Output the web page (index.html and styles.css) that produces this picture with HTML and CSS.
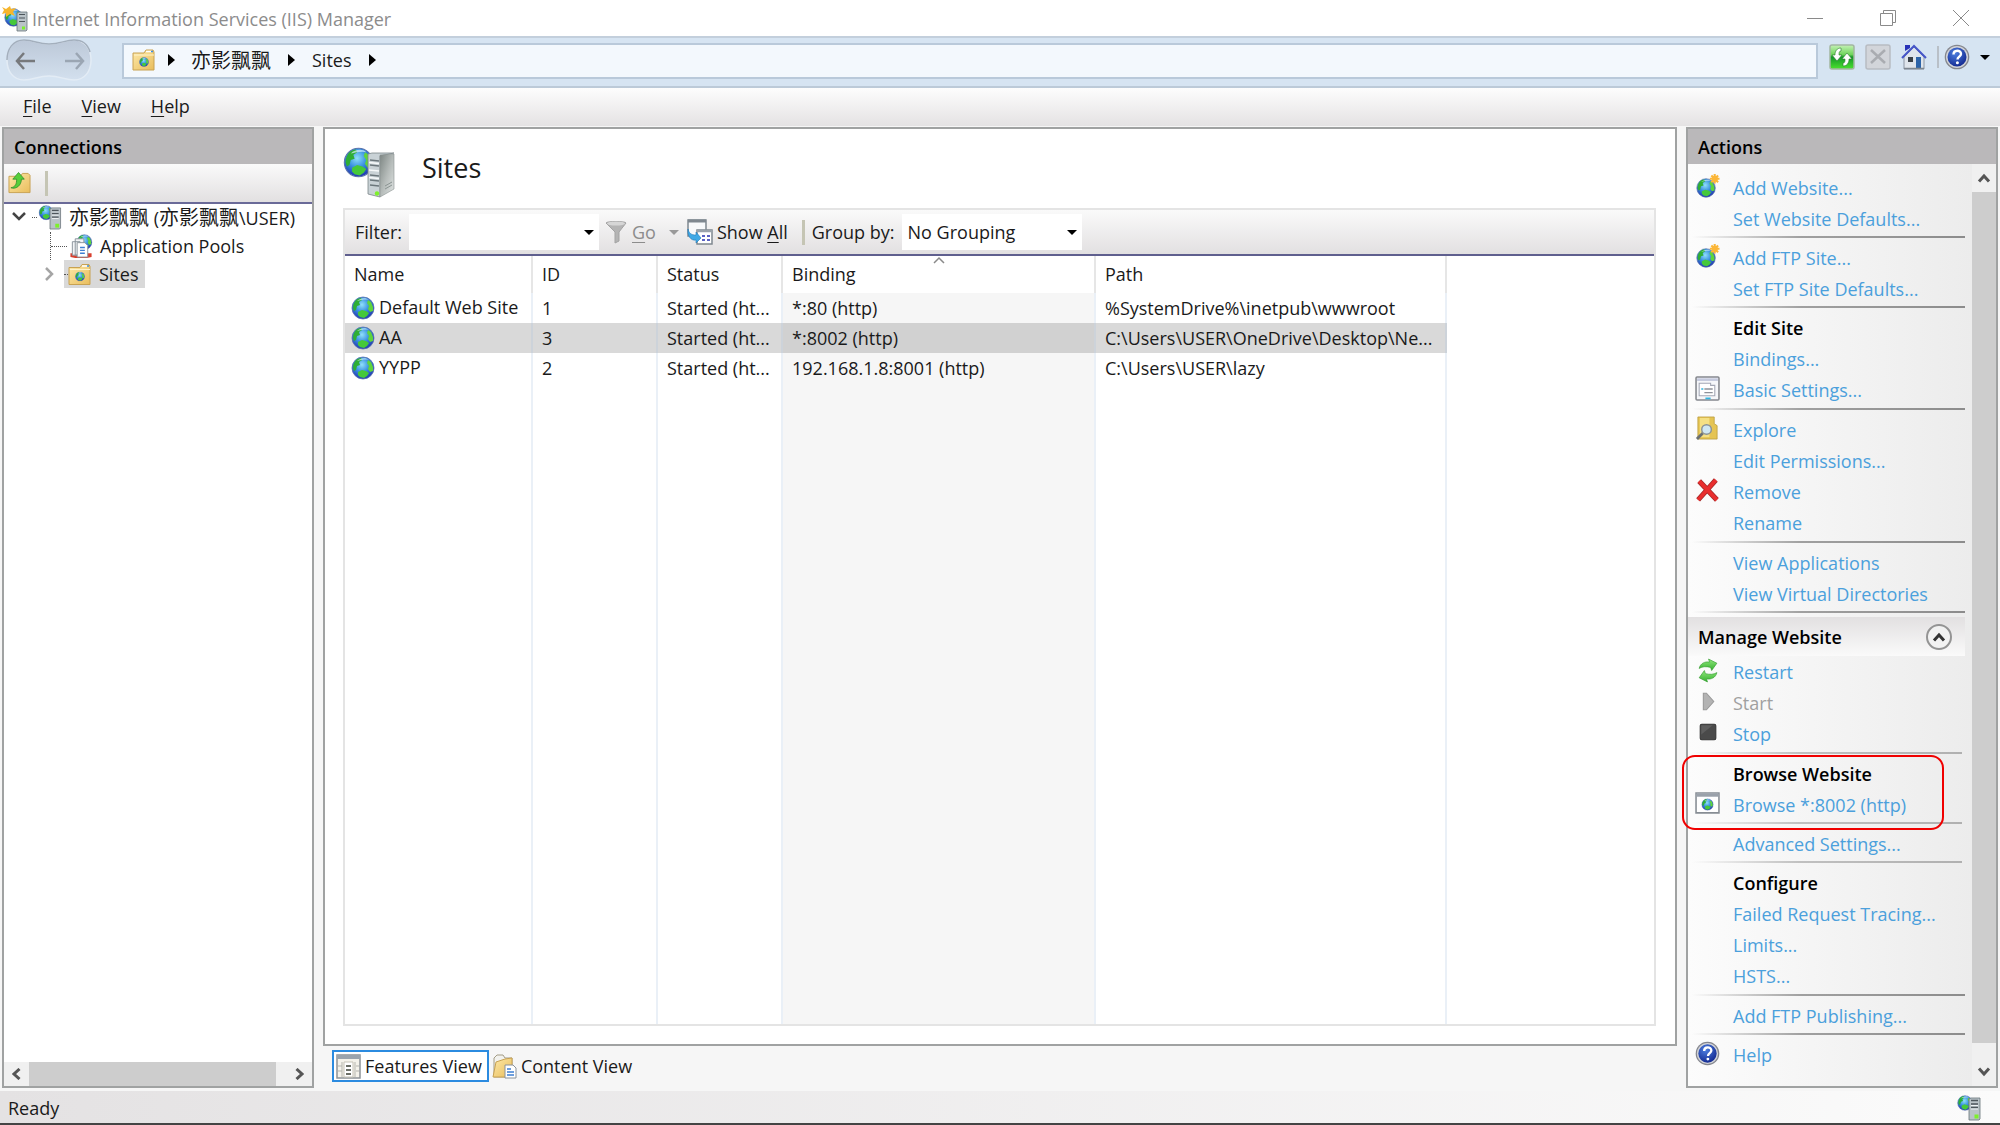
FILE: index.html
```html
<!DOCTYPE html>
<html lang="en">
<head>
    <meta charset="UTF-8">
    <meta name="viewport" content="width=device-width, initial-scale=1.0">
    <title>Internet Information Services (IIS) Manager</title>
    <link rel="stylesheet" href="styles.css">
</head>
<body>
    <!-- Shared icons -->
    <svg class="icon-defs" width="0" height="0" aria-hidden="true">
        <defs>
            <radialGradient id="ocean" cx="45%" cy="35%" r="65%">
                <stop offset="0" stop-color="#8fe0fb"/>
                <stop offset="0.5" stop-color="#3a90e0"/>
                <stop offset="1" stop-color="#1f34b0"/>
            </radialGradient>
            <linearGradient id="folder" x1="0" y1="0" x2="1" y2="1">
                <stop offset="0" stop-color="#fde9a9"/>
                <stop offset="1" stop-color="#e9bd5c"/>
            </linearGradient>
            <linearGradient id="metal" x1="0" y1="0" x2="1" y2="1">
                <stop offset="0" stop-color="#7d8683"/>
                <stop offset="0.5" stop-color="#b5bbb9"/>
                <stop offset="1" stop-color="#e2e6e5"/>
            </linearGradient>
            <linearGradient id="go-green" x1="0" y1="0" x2="0" y2="1">
                <stop offset="0" stop-color="#c5f2b5"/>
                <stop offset="0.4" stop-color="#6fd45c"/>
                <stop offset="0.5" stop-color="#15952a"/>
                <stop offset="1" stop-color="#4be22e"/>
            </linearGradient>
            <linearGradient id="arrow-green" x1="0" y1="0" x2="0" y2="1">
                <stop offset="0" stop-color="#8fe77c"/>
                <stop offset="1" stop-color="#35b02f"/>
            </linearGradient>
            <linearGradient id="nav-fill" x1="0" y1="0" x2="0" y2="1">
                <stop offset="0" stop-color="#bcc8d8"/>
                <stop offset="1" stop-color="#d3e0ee"/>
            </linearGradient>
            <radialGradient id="help-blue" cx="40%" cy="30%" r="75%">
                <stop offset="0" stop-color="#4d7fe0"/>
                <stop offset="1" stop-color="#12278f"/>
            </radialGradient>
        </defs>
        <symbol id="globe" viewBox="0 0 24 24">
            <circle cx="12" cy="12" r="11" fill="url(#ocean)" stroke="#5b74ad" stroke-width="0.8"/>
            <path d="M2 12C2 6 6 2 10 2l1 2-3 2 1 3-3 1-1 4-2 1z" fill="#2fae35"/>
            <path d="M17 4l3 2 2 5v4l-3 1-2-3 1-3-2-3z" fill="#5fd43c"/>
            <path d="M7 16l4-2 4 1 3 2-2 3-3 2-4-1-2-2z" fill="#45c83a"/>
            <path d="M6 5c3-3 9-4 12-1-3-1-8 0-12 1z" fill="#d8f2fb" opacity="0.7"/>
        </symbol>
        <symbol id="globe-new" viewBox="0 0 26 26">
            <use href="#globe" x="1" y="4" width="21" height="21"/>
            <path d="M20.500 0v10M15.500 5h10M17 1.500l7 7M24 1.500l-7 7" stroke="#fbb637" stroke-width="2.200"/>
            <circle cx="20.500" cy="5" r="3" fill="#fbb637"/>
        </symbol>
        <symbol id="server" viewBox="0 0 24 26">
            <use href="#globe" x="0" y="0" width="16" height="16"/>
            <path d="M12 4l2-1h9v21l-1 1H12z" fill="#bac3c8" stroke="#68737a" stroke-width="0.8"/>
            <path d="M14 5.500h7M14 9h7M14 12.500h7" stroke="#4d565c" stroke-width="1.300"/>
            <path d="M14 10.500h7M14 14h7" stroke="#eef2f4" stroke-width="1"/>
            <rect x="17.500" y="19.500" width="4" height="4" fill="#7df02c"/>
        </symbol>
        <symbol id="site-folder" viewBox="0 0 24 24">
            <path d="M1 5h11l2-3h7l1 2v18H1z" fill="url(#folder)" stroke="#c8a253" stroke-width="1"/>
            <path d="M14 3.500h6" stroke="#fff" stroke-width="1.500"/>
            <path d="M19 3.500h2" stroke="#3c8fe0" stroke-width="1.500"/>
            <path d="M2 7h20" stroke="#fff3c9" stroke-width="1"/>
            <use href="#globe" x="7" y="9" width="10" height="10"/>
        </symbol>
        <symbol id="help-icon" viewBox="0 0 26 26">
            <circle cx="13" cy="13" r="12.300" fill="#84868d"/>
            <circle cx="13" cy="13" r="11" fill="#d1d3d8"/>
            <circle cx="13" cy="13" r="9.500" fill="url(#help-blue)"/>
            <path d="M9.500 10.500c0-5 7.500-5 7.500-.500 0 2.500-3.500 2.800-3.500 5.500" fill="none" stroke="#fff" stroke-width="2.400"/>
            <circle cx="13.400" cy="18.800" r="1.500" fill="#fff"/>
        </symbol>
        <symbol id="chevron-up" viewBox="0 0 14 12">
            <path d="M2 9.500l5-5.500 5 5.500" fill="none" stroke="currentColor" stroke-width="3"/>
        </symbol>
    </svg>

    <!-- Title bar -->
    <header class="title-bar">
        <svg class="app-icon" viewBox="0 0 26 26">
            <use href="#globe" x="2" y="2" width="19" height="19"/>
            <path d="M15 7l2-1h8v18l-1 1h-9z" fill="#bac3c8" stroke="#68737a" stroke-width="0.800"/>
            <path d="M17 8.500h6M17 12h6M17 15.500h6" stroke="#4d565c" stroke-width="1.200"/>
            <rect x="20" y="20.500" width="3" height="3" fill="#7df02c"/>
            <path d="M0 1l4 2 4-3 1 3 5-1-3 4 2 4-5-2-4 3v-4l-4 1 2-4z" fill="#f6b52c"/>
        </svg>
        <h1>Internet Information Services (IIS) Manager</h1>
        <div class="window-buttons">
            <button aria-label="Minimize"><svg width="16" height="16" viewBox="0 0 16 16"><path d="M0 8.500h16"/></svg></button>
            <button aria-label="Restore"><svg width="16" height="16" viewBox="0 0 16 16"><path d="M.5 3.500h12v12H.5zM3.500 3.500v-3h12v12h-3"/></svg></button>
            <button aria-label="Close"><svg width="16" height="16" viewBox="0 0 16 16"><path d="M0 0l16 16M16 0L0 16"/></svg></button>
        </div>
    </header>

    <!-- Address bar -->
    <nav class="nav-bar">
        <div class="nav-history">
            <svg class="nav-shape" viewBox="0 0 86 42">
                <path d="M18 1c10 0 14 4 25 4S59 1 68 1c11 0 17 9 17 20s-6 20-17 20c-9 0-14-4-25-4s-15 4-25 4C7 41 1 32 1 21S7 1 18 1z" fill="url(#nav-fill)" stroke="#e3ecf5" stroke-width="1.500"/>
                <path d="M1 21C1 10 7 1 18 1c10 0 14 4 25 4S59 1 68 1c9 0 14 5 16 12" fill="none" stroke="#a3afbd" stroke-width="1.500"/>
            </svg>
            <button aria-label="Back"><svg width="20" height="18" viewBox="0 0 20 18"><path d="M9 1L2 9l7 8M2 9h18" fill="none" stroke="#77797c" stroke-width="2.500"/></svg></button>
            <button aria-label="Forward"><svg width="20" height="18" viewBox="0 0 20 18"><path d="M11 1l7 8-7 8M18 9H0" fill="none" stroke="#9ba6b3" stroke-width="2.500"/></svg></button>
        </div>
        <div class="address">
            <svg class="crumb-icon"><use href="#site-folder"/></svg>
            <i class="crumb-arrow"></i>
            <a href="#" class="cjk">亦影飘飘</a>
            <i class="crumb-arrow"></i>
            <a href="#">Sites</a>
            <i class="crumb-arrow"></i>
        </div>
        <div class="nav-tools">
            <button aria-label="Refresh"><svg viewBox="0 0 26 26">
                <rect x="1" y="1" width="24" height="24" rx="2" fill="url(#go-green)" stroke="#a3b6a1" stroke-width="1.500"/>
                <path d="M12 4C8 4 6 7 6 11H3l5 6 5-6h-3c0-2 0-4 2-4zM14 22c4 0 6-3 6-7h3l-5-6-5 6h3c0 2 0 4-2 4z" fill="#fff" stroke="#2a7a2c" stroke-width="0.600"/>
            </svg></button>
            <button aria-label="Stop loading" disabled><svg viewBox="0 0 26 26">
                <rect x="1" y="1" width="24" height="24" rx="2" fill="#d2d5da" stroke="#b8bcc2" stroke-width="1.500"/>
                <path d="M6 6l14 13M20 6L6 19" stroke="#a9acb1" stroke-width="2.500"/>
            </svg></button>
            <button aria-label="Home"><svg viewBox="0 0 26 26">
                <path d="M3 13l10-10 10 10v12H3z" fill="#dfe5ec" stroke="#8c96a4" stroke-width="1"/>
                <path d="M4 7V1h5v3z" fill="#2832b8"/>
                <path d="M1 14L13 2l12 12" fill="none" stroke="#4656c8" stroke-width="2"/>
                <rect x="7" y="13" width="5" height="5" fill="#3a4148"/>
                <rect x="15" y="13" width="5" height="11" fill="#2c63a8"/>
                <path d="M3 24.500h20" stroke="#7c868f" stroke-width="1.500"/>
            </svg></button>
            <span class="nav-separator"></span>
            <button aria-label="Help"><svg><use href="#help-icon"/></svg></button>
            <i class="caret"></i>
        </div>
    </nav>

    <!-- Menu -->
    <nav class="menu-bar">
        <button><u>F</u>ile</button>
        <button><u>V</u>iew</button>
        <button><u>H</u>elp</button>
    </nav>

    <main class="workspace">
        <!-- Connections -->
        <aside class="panel connections">
            <h2 class="panel-title">Connections</h2>
            <div class="tree-toolbar">
                <button aria-label="Up"><svg viewBox="0 0 24 24">
                    <path d="M1 5h12l2-3h6l2 2v18H1z" fill="url(#folder)" stroke="#c8a253"/>
                    <path d="M3 17c5-1 6-4 6-9H5l6-7 6 7h-3c0 6-5 11-11 9z" fill="#55cf3a" stroke="#2c8b2a" stroke-width="0.800"/>
                </svg></button>
                <span class="tool-separator"></span>
            </div>
            <ul class="tree">
                <li class="tree-row root">
                    <svg class="tree-chevron open" viewBox="0 0 14 10"><path d="M1 1l6 6 6-6"/></svg>
                    <i class="dots"></i>
                    <svg class="tree-icon"><use href="#server"/></svg>
                    <span class="tree-text"><span class="cjk">亦影飘飘</span> (<span class="cjk">亦影飘飘</span>\USER)</span>
                </li>
                <li class="tree-row pools">
                    <i class="dots"></i>
                    <svg class="tree-icon" viewBox="0 0 24 26">
                        <use href="#globe" x="7" y="0" width="17" height="17"/>
                        <path d="M1 20h22v4l-5 1H6l-5-1z" fill="#d8402f"/>
                        <path d="M3 8h8v14H3zM6 5h9v17H6z" fill="#f2f4f6" stroke="#8b949c"/>
                        <path d="M8 9h8l3 3v12H8z" fill="#fff" stroke="#8b949c"/>
                        <path d="M11 14h5M11 17h5M11 20h5" stroke="#3e7fd2" stroke-width="1.500"/>
                    </svg>
                    <span class="tree-text">Application Pools</span>
                </li>
                <li class="tree-row sites">
                    <svg class="tree-chevron" viewBox="0 0 10 14"><path d="M1 1l6 6-6 6"/></svg>
                    <span class="tree-selected">
                        <i class="dots"></i>
                        <svg class="tree-icon"><use href="#site-folder"/></svg>
                        <span class="tree-text">Sites</span>
                    </span>
                </li>
            </ul>
            <div class="h-scroll">
                <svg viewBox="0 0 14 12"><use href="#chevron-up" transform="rotate(-90 7 6)" width="14" height="12"/></svg>
                <i class="h-thumb"></i>
                <svg viewBox="0 0 14 12"><use href="#chevron-up" transform="rotate(90 7 6)" width="14" height="12"/></svg>
            </div>
        </aside>

        <!-- Sites list -->
        <section class="center">
            <div class="panel content">
                <div class="content-head">
                    <svg class="sites-icon" viewBox="0 0 52 52">
                        <use href="#globe" x="0" y="0" width="31" height="31"/>
                        <path d="M25 7l4-1h22l-14 3v41l-12-3z" fill="#c9d2d6" stroke="#7b8589" stroke-width="0.800"/>
                        <path d="M37 8l14-1v35L37 50z" fill="url(#metal)" stroke="#899290" stroke-width="0.600"/>
                        <path d="M27 13l9 1M27 18l9 1M27 28l9 1M27 33l9 1M27 38l9 1" stroke="#6c777c" stroke-width="1.400"/>
                        <path d="M26 15.500l10 1M26 23l10 1M26 30.500l10 1" stroke="#f6f9fa" stroke-width="1.500"/>
                        <path d="M42 42l7-4M42 39l7-4" stroke="#8a9492" stroke-width="1"/>
                        <circle cx="34" cy="46.500" r="2.200" fill="#7ff02a"/>
                    </svg>
                    <h2>Sites</h2>
                </div>
                <div class="grid-box">
                    <div class="filter-bar">
                        <label for="filter">Filter:</label>
                        <span class="combo filter-combo">
                            <input id="filter" type="text">
                            <i class="caret"></i>
                        </span>
                        <button class="go" disabled>
                            <svg width="22" height="24" viewBox="0 0 22 24"><path d="M1 3c0-2 20-2 20 0l-7 9v9l-4 2V12z" fill="#b4b4b4" stroke="#a3a3a3"/><ellipse cx="11" cy="3.500" rx="9" ry="2" fill="#d6d6d6"/></svg>
                            <span><u>G</u>o</span>
                            <i class="caret"></i>
                        </button>
                        <button class="show-all">
                            <svg width="26" height="26" viewBox="0 0 26 26">
                                <path d="M1 1h18v16H1z" fill="#f7f9fb" stroke="#7f8890" stroke-width="1.500"/>
                                <path d="M1 2h18" stroke="#7f8890" stroke-width="3"/>
                                <path d="M10 11h15v14H10z" fill="#fff" stroke="#7f8890" stroke-width="1.500"/>
                                <path d="M10 12h15" stroke="#9aa3ab" stroke-width="2.500"/>
                                <path d="M15 17h3M20 17h3M15 21h3M20 21h3" stroke="#5a62c4" stroke-width="2"/>
                                <path d="M1 10c1 4 3 6 8 6v-3l5 6-5 5v-3C4 22 0 17 1 10z" fill="#3fa9e6" stroke="#2079b8" stroke-width="0.600"/>
                            </svg>
                            <span>Show <u>A</u>ll</span>
                        </button>
                        <span class="tool-separator"></span>
                        <label for="grouping">Group by:</label>
                        <span class="combo group-combo">
                            <select id="grouping">
                                <option>No Grouping</option>
                            </select>
                            <i class="caret"></i>
                        </span>
                    </div>
                    <div class="table-wrap">
                        <table>
                            <colgroup>
                                <col class="col-name"><col class="col-id"><col class="col-status"><col class="col-binding"><col class="col-path"><col>
                            </colgroup>
                            <thead>
                                <tr>
                                    <th>Name</th>
                                    <th>ID</th>
                                    <th>Status</th>
                                    <th class="sorted">Binding<svg class="sort-mark" viewBox="0 0 12 8"><path d="M1 7l5-5 5 5"/></svg></th>
                                    <th>Path</th>
                                    <th></th>
                                </tr>
                            </thead>
                            <tbody>
                                <tr>
                                    <td class="name"><svg><use href="#globe"/></svg>Default Web Site</td>
                                    <td>1</td>
                                    <td>Started (ht...</td>
                                    <td class="sorted">*:80 (http)</td>
                                    <td>%SystemDrive%\inetpub\wwwroot</td>
                                    <td></td>
                                </tr>
                                <tr class="selected">
                                    <td class="name"><svg><use href="#globe"/></svg>AA</td>
                                    <td>3</td>
                                    <td>Started (ht...</td>
                                    <td class="sorted">*:8002 (http)</td>
                                    <td>C:\Users\USER\OneDrive\Desktop\Ne...</td>
                                    <td></td>
                                </tr>
                                <tr>
                                    <td class="name"><svg><use href="#globe"/></svg>YYPP</td>
                                    <td>2</td>
                                    <td>Started (ht...</td>
                                    <td class="sorted">192.168.1.8:8001 (http)</td>
                                    <td>C:\Users\USER\lazy</td>
                                    <td></td>
                                </tr>
                                <tr class="filler">
                                    <td></td><td></td><td></td><td class="sorted"></td><td></td><td></td>
                                </tr>
                            </tbody>
                        </table>
                    </div>
                </div>
            </div>
            <div class="view-tabs">
                <button class="active">
                    <svg width="25" height="25" viewBox="0 0 25 25">
                        <path d="M1 1h23v23H1z" fill="#f4f2ea" stroke="#8d9296" stroke-width="1.500"/>
                        <path d="M1 3h23" stroke="#9aa3ad" stroke-width="4"/>
                        <path d="M6 8v15M19 8v15M2 12h4M2 17h4M20 12h3M20 17h3" stroke="#b5b5ae"/>
                        <path d="M8 8h9v15H8z" fill="#fff" stroke="#c5c2b5"/>
                        <path d="M10 12h5M10 16h5M10 20h5" stroke="#6b6f66" stroke-width="1.800"/>
                    </svg>
                    Features View
                </button>
                <button>
                    <svg width="25" height="25" viewBox="0 0 25 25">
                        <path d="M2 4l3-3h6l2 3h7v19H2z" fill="#f2f2ee" stroke="#a39c86"/>
                        <path d="M1 23L4 8l9-3 7-1v19z" fill="url(#folder)" stroke="#c8a253"/>
                        <path d="M13 11h8l3 3v10H13z" fill="#fff" stroke="#8a929a"/>
                        <path d="M15 15h4M15 18h7M15 21h7" stroke="#3e7fd2" stroke-width="1.500"/>
                    </svg>
                    Content View
                </button>
            </div>
        </section>

        <!-- Actions -->
        <aside class="panel actions">
            <h2 class="panel-title">Actions</h2>
            <div class="actions-body">
                <div class="action-list">
                    <ul class="group">
                        <li><svg class="action-icon"><use href="#globe-new"/></svg><a href="#">Add Website...</a></li>
                        <li><a href="#">Set Website Defaults...</a></li>
                    </ul>
                    <ul class="group">
                        <li><svg class="action-icon"><use href="#globe-new"/></svg><a href="#">Add FTP Site...</a></li>
                        <li><a href="#">Set FTP Site Defaults...</a></li>
                    </ul>
                    <ul class="group long">
                        <li><h3>Edit Site</h3></li>
                        <li><a href="#">Bindings...</a></li>
                        <li><svg class="action-icon" viewBox="0 0 24 24">
                            <rect x="1" y="1" width="22" height="22" rx="1" fill="#f6f7fa" stroke="#85888e" stroke-width="1.500"/>
                            <path d="M2 3.500h20" stroke="#c4c9dd" stroke-width="2.500"/>
                            <path d="M4 9V7h11v2h4v10H4z" fill="#fff" stroke="#a3a7b5"/>
                            <path d="M9 12.500h8M9 16h8" stroke="#8e9199" stroke-width="1.300"/>
                            <path d="M6 12.500h2M10 21.500h5" stroke="#32b5e0" stroke-width="1.500"/>
                        </svg><a href="#">Basic Settings...</a></li>
                    </ul>
                    <ul class="group long">
                        <li><svg class="action-icon" viewBox="0 0 24 26">
                            <path d="M2 1h17v7l3 2v14H2z" fill="#e5c453" stroke="#b89a3a" stroke-width="0.800"/>
                            <path d="M4 2h10v20H4z" fill="#f5e084"/>
                            <circle cx="11" cy="14" r="5" fill="#cfe7f3" stroke="#8a9296" stroke-width="1.500"/>
                            <path d="M7 18l-6 6" stroke="#6b7073" stroke-width="3"/>
                        </svg><a href="#">Explore</a></li>
                        <li><a href="#">Edit Permissions...</a></li>
                        <li><svg class="action-icon" viewBox="0 0 24 24">
                            <path d="M4 3l17 18M20 2L3 21" stroke="#a32a2a" stroke-width="5"/>
                            <path d="M4 3l17 18M20 2L3 21" stroke="#e92e2e" stroke-width="3.500"/>
                        </svg><a href="#">Remove</a></li>
                        <li><a href="#">Rename</a></li>
                    </ul>
                    <ul class="group">
                        <li><a href="#">View Applications</a></li>
                        <li><a href="#">View Virtual Directories</a></li>
                    </ul>
                    <div class="section-head">
                        <h3>Manage Website</h3>
                        <button aria-label="Collapse"><svg width="14" height="12"><use href="#chevron-up"/></svg></button>
                    </div>
                    <ul class="group inner long">
                        <li><svg class="action-icon" viewBox="0 0 24 24">
                            <path d="M4 10c1-5 6-7 10-6l-1-3 8 4-5 7-1-3c-4-1-8-1-11 1z" fill="url(#arrow-green)" stroke="#2f9a2c" stroke-width="0.600"/>
                            <path d="M21 14c-1 5-6 7-10 6l1 3-8-4 5-7 1 3c4 1 8 1 11-1z" fill="url(#arrow-green)" stroke="#2f9a2c" stroke-width="0.600"/>
                        </svg><a href="#">Restart</a></li>
                        <li><svg class="action-icon" viewBox="0 0 24 24"><path d="M8 4h3l7 8-7 8H8z" fill="#b3b3b3" stroke="#999"/></svg><span class="disabled">Start</span></li>
                        <li><svg class="action-icon" viewBox="0 0 24 24"><rect x="5" y="4" width="15" height="15" rx="1.500" fill="#4a4a4a" stroke="#333"/><path d="M6 14L17 5H6z" fill="#5e5e5e"/></svg><a href="#">Stop</a></li>
                    </ul>
                    <ul class="group inner highlighted">
                        <li><h3>Browse Website</h3></li>
                        <li><svg class="action-icon" viewBox="0 0 24 24">
                            <path d="M1 2h22v19H1z" fill="#fff" stroke="#878d94" stroke-width="1.500"/>
                            <path d="M1 4h22" stroke="#9aa1aa" stroke-width="3"/>
                            <use href="#globe" x="6" y="7" width="12" height="12"/>
                        </svg><a href="#">Browse *:8002 (http)</a></li>
                    </ul>
                    <ul class="group inner">
                        <li><a href="#">Advanced Settings...</a></li>
                    </ul>
                    <ul class="group long">
                        <li><h3>Configure</h3></li>
                        <li><a href="#">Failed Request Tracing...</a></li>
                        <li><a href="#">Limits...</a></li>
                        <li><a href="#">HSTS...</a></li>
                    </ul>
                    <ul class="group">
                        <li><a href="#">Add FTP Publishing...</a></li>
                    </ul>
                    <ul class="group last">
                        <li><svg class="action-icon"><use href="#help-icon"/></svg><a href="#">Help</a></li>
                    </ul>
                </div>
                <div class="v-scroll">
                    <svg viewBox="0 0 14 12"><use href="#chevron-up" width="14" height="12"/></svg>
                    <i class="v-thumb"></i>
                    <svg viewBox="0 0 14 12"><use href="#chevron-up" transform="rotate(180 7 6)" width="14" height="12"/></svg>
                </div>
            </div>
        </aside>
    </main>

    <footer class="status-bar">
        <span>Ready</span>
        <svg><use href="#server"/></svg>
    </footer>
</body>
</html>
```
FILE: styles.css
```css
* {
    box-sizing: border-box;
}
body {
    display: flex;
    flex-direction: column;
    height: 100vh;
    margin: 0;
    background: #f6f6f6;
    color: #1a1a1a;
    font-family: "Open Sans", "Noto Sans CJK SC", sans-serif;
    font-size: 18px;
    line-height: 24px;
    overflow: hidden;
}
h1, h2, h3, ul {
    margin: 0;
    padding: 0;
    list-style: none;
}
button {
    padding: 0;
    border: 0;
    background: none;
    color: inherit;
    font: inherit;
}
a {
    text-decoration: none;
}
svg {
    display: block;
    flex: none;
}
.icon-defs {
    position: absolute;
}
.cjk {
    font-family: "Noto Sans CJK SC", sans-serif;
    font-size: 20px;
}
u {
    text-underline-offset: 3px;
}
.caret {
    flex: none;
    border: 5px solid transparent;
    border-top-color: #000;
    border-bottom: 0;
}

/* Title bar */
.title-bar {
    display: flex;
    align-items: center;
    flex: none;
    height: 36px;
    padding: 2px 14px 0 2px;
    background: #fff;
    color: #8c8c8c;
}
.title-bar h1 {
    flex: 1;
    margin-left: 4px;
    font-size: 18px;
    font-weight: 400;
}
.app-icon {
    width: 26px;
    height: 26px;
}
.window-buttons {
    display: flex;
    gap: 23px;
}
.window-buttons button {
    display: grid;
    place-items: center;
    width: 50px;
    height: 34px;
    padding-bottom: 2px;
}
.window-buttons path {
    fill: none;
    stroke: #8a8a8a;
}

/* Address bar */
.nav-bar {
    display: flex;
    flex: none;
    height: 52px;
    padding-left: 6px;
    border-top: 2px solid #c3cfdc;
    border-bottom: 2px solid #bccad8;
    background: #d6e4f2;
}
.nav-history {
    display: flex;
    position: relative;
    align-items: center;
    gap: 30px;
    width: 86px;
    height: 46px;
    padding-left: 9px;
}
.nav-history button {
    position: relative;
}
.nav-shape {
    position: absolute;
    top: 1px;
    left: 0;
    width: 86px;
    height: 42px;
}
.address {
    display: flex;
    flex: 1;
    align-items: center;
    height: 36px;
    margin: 5px 0 0 30px;
    padding: 0 0 2px 8px;
    border: 2px solid #b9c9da;
    background: #f3f8fd;
}
.address a {
    color: #1a1a1a;
}
.crumb-icon {
    width: 24px;
    height: 24px;
}
.crumb-arrow {
    border: 6px solid transparent;
    border-left: 7px solid #000;
    border-right: 0;
    margin: 0 17px;
}
.crumb-icon + .crumb-arrow {
    margin: 0 16px 0 12px;
}
.nav-tools {
    display: flex;
    align-items: center;
    gap: 10px;
    height: 38px;
    padding: 0 10px 0 11px;
}
.nav-tools svg {
    width: 26px;
    height: 26px;
}
.nav-separator {
    width: 2px;
    height: 22px;
    margin-right: -5px;
    background: #b9c0c8;
}

/* Menu */
.menu-bar {
    display: flex;
    flex: none;
    gap: 30px;
    height: 38px;
    padding: 0 0 2px 23px;
    background: linear-gradient(#fdfdfd, #e4e2e3);
}

/* Panels */
.workspace {
    display: flex;
    flex: 1;
    gap: 9px;
    min-height: 0;
    padding: 1px 2px 3px;
}
.panel {
    display: flex;
    flex-direction: column;
    border: 2px solid #a0a2a2;
    background: #fff;
}
.connections, .actions {
    flex: none;
    width: 312px;
}
.panel-title {
    flex: none;
    height: 35px;
    padding-left: 10px;
    background: #bab8ba;
    color: #000;
    font-size: 18px;
    font-weight: 600;
    line-height: 36px;
}

/* Connections tree */
.tree-toolbar {
    display: flex;
    align-items: center;
    flex: none;
    gap: 14px;
    height: 40px;
    padding-left: 4px;
    border-bottom: 2px solid #6a6a98;
    background: linear-gradient(#fafafa, #e2e0e1);
}
.tree-toolbar svg {
    width: 23px;
    height: 24px;
}
.tool-separator {
    width: 3px;
    height: 25px;
    background: #c5c5b4;
}
.tree {
    flex: 1;
}
.tree-row {
    display: flex;
    position: relative;
    align-items: center;
    height: 28px;
    white-space: nowrap;
}
.root {
    padding: 0 0 2px 8px;
}
.pools {
    padding-left: 47px;
}
.sites {
    padding-left: 41px;
}
/* dotted trunk of the tree */
.pools::before {
    content: "";
    position: absolute;
    top: 0;
    left: 46px;
    height: 28px;
    border-left: 1px dotted #555;
}
.tree-chevron {
    width: 10px;
    height: 14px;
    fill: none;
    stroke: #a5a5a5;
    stroke-width: 2.5;
}
.tree-chevron.open {
    width: 14px;
    height: 10px;
    stroke: #444;
}
.dots {
    border-top: 1px dotted #555;
}
.root .dots {
    width: 5px;
    margin: 0 1px 0 6px;
}
.pools .dots {
    width: 16px;
    margin-right: 2px;
}
.sites .dots {
    width: 4px;
}
.tree-icon {
    width: 24px;
    height: 25px;
}
.tree-text {
    margin-left: 7px;
}
.tree-selected {
    display: flex;
    align-items: center;
    height: 28px;
    margin-left: 9px;
    padding-right: 6px;
    background: #d9d9d9;
}
.h-scroll, .v-scroll {
    display: flex;
    flex: none;
    align-items: center;
    background: #f0f0f0;
    color: #555;
}
.h-scroll {
    height: 24px;
}
.h-scroll svg, .v-scroll svg {
    width: 14px;
    height: 12px;
    margin: 0 5px;
}
.h-thumb {
    flex: 1;
    height: 24px;
    margin: 0 12px 0 1px;
    background: #cdcdcd;
}

/* Sites list */
.center {
    display: flex;
    flex: 1;
    flex-direction: column;
    min-width: 0;
}
.content {
    flex: 1;
    padding: 18px 19px 18px 18px;
}
.content-head {
    display: flex;
    gap: 27px;
    flex: none;
    height: 61px;
}
.content-head h2 {
    font-size: 27px;
    font-weight: 400;
    line-height: 42px;
}
.sites-icon {
    width: 52px;
    height: 52px;
}
.grid-box {
    display: flex;
    flex: 1;
    flex-direction: column;
    border: 2px solid #e4e4e4;
}
.filter-bar {
    display: flex;
    align-items: center;
    flex: none;
    height: 46px;
    padding-left: 10px;
    border-bottom: 2px solid #5f5f8e;
    background: linear-gradient(#fafafa, #e2e0e1);
}
.combo {
    display: flex;
    align-items: center;
    height: 36px;
    margin-left: 7px;
    padding-right: 5px;
    background: #fff;
}
.combo input, .combo select {
    flex: 1;
    min-width: 0;
    height: 36px;
    padding: 0 6px;
    border: 0;
    outline: 0;
    background: transparent;
    color: inherit;
    font: inherit;
    appearance: none;
}
.filter-combo {
    width: 190px;
}
.group-combo {
    width: 180px;
}
.go, .show-all {
    display: flex;
    align-items: center;
}
.go {
    gap: 5px;
    margin-left: 6px;
    color: #8c8c8c;
}
.go .caret {
    margin-left: 8px;
    border-top-color: #999;
}
.show-all {
    gap: 4px;
    margin: 0 14px 0 8px;
}
.filter-bar .tool-separator {
    margin-right: 7px;
}

/* Table */
.table-wrap {
    flex: 1;
    min-height: 0;
}
table {
    width: 100%;
    height: 100%;
    border-collapse: collapse;
    table-layout: fixed;
}
.col-name {
    width: 187px;
}
.col-id, .col-status {
    width: 125px;
}
.col-binding {
    width: 313px;
}
.col-path {
    width: 351px;
}
th, td {
    height: 30px;
    padding: 0 0 1px 9px;
    border-right: 2px solid #eaf0f7;
    font-weight: 400;
    text-align: left;
    white-space: nowrap;
}
th {
    position: relative;
    height: 37px;
    border-right-color: #e6e6e6;
}
th:last-child, td:last-child {
    border-right: 0;
}
.sort-mark {
    position: absolute;
    top: 0;
    left: calc(50% - 6px);
    width: 12px;
    height: 8px;
    fill: none;
    stroke: #8a8a8a;
    stroke-width: 1.5;
}
td.sorted {
    background: #f6f6f6;
}
td.name {
    padding-left: 6px;
}
.name svg {
    display: inline-block;
    width: 24px;
    height: 24px;
    margin-right: 4px;
    vertical-align: -6px;
}
.selected td {
    border-right-color: #cdd3da;
    background: #d9d9d9;
}
.selected td.sorted {
    background: #d1d1d1;
}
.selected td:last-child {
    background: #fff;
}
.filler td {
    height: auto;
}

/* View tabs */
.view-tabs {
    display: flex;
    flex: none;
    gap: 3px;
    height: 42px;
    padding: 4px 0 0 9px;
}
.view-tabs button {
    display: flex;
    align-items: center;
    gap: 4px;
    height: 32px;
}
.view-tabs .active {
    padding: 0 5px 0 2px;
    border: 2px solid #2b8be0;
    background: #fff;
}

/* Actions */
.actions-body {
    display: flex;
    flex: 1;
    min-height: 0;
}
.action-list {
    flex: 1;
    padding: 8px 7px 0 0;
    background: linear-gradient(90deg, #fcfcfc, #ececec);
}
.group {
    position: relative;
    padding-bottom: 8px;
}
.group.long {
    padding-bottom: 9px;
}
/* divider that fades out to the left */
.group::after {
    content: "";
    position: absolute;
    right: 0;
    bottom: 4px;
    left: 4px;
    height: 2px;
    background: linear-gradient(90deg, transparent, #a0a0a0 40%, #8c8c8c);
}
.group.inner::after {
    right: 3px;
    background: linear-gradient(90deg, transparent, #c0c0c0 40%, #b0b0b0);
}
.group.last::after {
    display: none;
}
.group li {
    display: flex;
    position: relative;
    align-items: center;
    height: 31px;
    padding-left: 45px;
    white-space: nowrap;
}
.action-icon {
    position: absolute;
    top: 2px;
    left: 7px;
    width: 25px;
    height: 25px;
}
.group a {
    color: #4ba0dc;
}
.disabled {
    color: #a0a0a0;
}
h3 {
    color: #000;
    font-size: 18px;
    font-weight: 600;
}
.section-head {
    display: flex;
    align-items: center;
    justify-content: space-between;
    height: 39px;
    padding: 0 13px 0 10px;
    background: linear-gradient(#e2e0e1, #fafafa);
}
.section-head button {
    display: grid;
    place-items: center;
    width: 26px;
    height: 26px;
    border: 2px solid #949494;
    border-radius: 50%;
    background: #f2f2f2;
    color: #333;
}
/* red marker round the browse group */
.highlighted::before {
    content: "";
    position: absolute;
    z-index: 1;
    top: -3px;
    right: 21px;
    bottom: -2px;
    left: -6px;
    border: 2px solid #f00000;
    border-radius: 13px;
}
.v-scroll {
    flex-direction: column;
    width: 24px;
}
.v-scroll svg {
    margin: 8px 0;
}
.v-thumb {
    flex: 1;
    width: 24px;
    margin-bottom: 15px;
    background: #cdcdcd;
}

/* Status bar */
.status-bar {
    display: flex;
    align-items: center;
    justify-content: space-between;
    flex: none;
    height: 34px;
    padding: 2px 19px 0 8px;
    border-bottom: 2px solid #444;
    background: linear-gradient(90deg, #e4e2e3, #fbfbfb);
}
.status-bar svg {
    width: 24px;
    height: 26px;
}
```
